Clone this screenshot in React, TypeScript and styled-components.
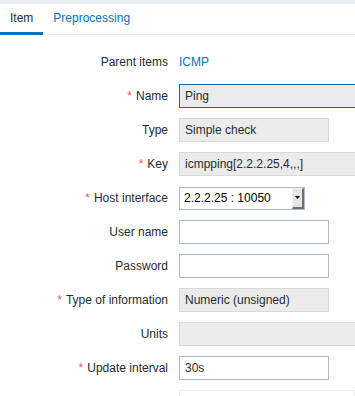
import * as React from 'react';
import styled, { createGlobalStyle } from 'styled-components';

const GlobalStyle = createGlobalStyle`
  html, body {
    margin: 0;
    padding: 0;
    background: #ffffff;
    overflow: hidden;
  }
  body {
    font-family: 'Liberation Sans', Arial, sans-serif;
    font-size: 12px;
    color: #1f2c33;
  }
`;

const Page = styled.div`
  width: 355px;
  height: 396px;
  overflow: hidden;
  background: #fff;
`;

const TopStrip = styled.div`
  height: 4px;
  background: #ebeef0;
`;

const TabBar = styled.div`
  display: flex;
  height: 30px;
  border-bottom: 1px solid #ebeef0;
`;

const Tab = styled.div<{ $active?: boolean }>`
  display: flex;
  align-items: center;
  padding: 0 10px;
  height: 28px;
  margin-bottom: -1px;
  font-size: 12px;
  color: ${({ $active }) => ($active ? '#1f2c33' : '#0275b8')};
  border-bottom: 3px solid ${({ $active }) => ($active ? '#0275b8' : 'transparent')};
`;

const Form = styled.div`
  display: flex;
  flex-direction: column;
  gap: 10px;
  padding-top: 15px;
`;

const Row = styled.div`
  display: flex;
  align-items: center;
  gap: 11px;
  min-height: 24px;
`;

const Label = styled.div`
  flex: 0 0 168px;
  text-align: right;
  white-space: nowrap;
`;

const Required = styled.span`
  color: #e45959;
  margin-right: 4px;
`;

const Field = styled.div`
  flex: 1;
  display: flex;
  min-width: 0;
`;

const Link = styled.span`
  color: #0275b8;
`;

const Input = styled.div<{ $width: number; $readonly?: boolean; $focused?: boolean }>`
  box-sizing: border-box;
  flex: 0 0 auto;
  width: ${({ $width }) => $width}px;
  height: 24px;
  padding: 0 5px;
  display: flex;
  align-items: center;
  white-space: nowrap;
  background: ${({ $readonly }) => ($readonly ? '#ebebeb' : '#ffffff')};
  border: 1px solid
    ${({ $readonly, $focused }) => ($focused ? '#1f65a6' : $readonly ? '#d5dadd' : '#acbbc2')};
  color: #1f2c33;
`;

const Select = styled.div`
  box-sizing: border-box;
  width: 126px;
  height: 23px;
  display: flex;
  align-items: stretch;
  border: 1px solid #acbbc2;
  background: #fff;
`;

const SelectText = styled.div`
  flex: 1;
  display: flex;
  align-items: center;
  padding-left: 4px;
  font-family: 'Liberation Sans', Arial, sans-serif;
  font-size: 12px;
  color: #000;
`;

const SelectButton = styled.div`
  box-sizing: border-box;
  width: 12px;
  display: flex;
  align-items: center;
  justify-content: center;
  background: #e4e4e4;
  border-top: 1px solid #f4f4f4;
  border-left: 1px solid #f4f4f4;
  border-right: 2px solid #6e6e6e;
  border-bottom: 2px solid #6e6e6e;
`;

const IntervalBox = styled.div`
  box-sizing: border-box;
  width: 453px;
  height: 40px;
  border: 1px solid #ebeef0;
`;

export default function App() {
  return (
    <Page>
      <GlobalStyle />
      <TopStrip />
      <TabBar>
        <Tab $active>Item</Tab>
        <Tab>Preprocessing</Tab>
      </TabBar>
      <Form>
        <Row>
          <Label>Parent items</Label>
          <Field>
            <Link>ICMP</Link>
          </Field>
        </Row>
        <Row>
          <Label>
            <Required>*</Required>Name
          </Label>
          <Field>
            <Input $width={453} $readonly $focused>Ping</Input>
          </Field>
        </Row>
        <Row>
          <Label>Type</Label>
          <Field>
            <Input $width={150} $readonly>Simple check</Input>
          </Field>
        </Row>
        <Row>
          <Label>
            <Required>*</Required>Key
          </Label>
          <Field>
            <Input $width={453} $readonly>icmpping[2.2.2.25,4,,,]</Input>
          </Field>
        </Row>
        <Row>
          <Label>
            <Required>*</Required>Host interface
          </Label>
          <Field>
            <Select>
              <SelectText>2.2.2.25 : 10050</SelectText>
              <SelectButton>
                <svg width="5" height="3" viewBox="0 0 5 3">
                  <path d="M0 0H5L2.5 3Z" fill="#000" />
                </svg>
              </SelectButton>
            </Select>
          </Field>
        </Row>
        <Row>
          <Label>User name</Label>
          <Field>
            <Input $width={150} />
          </Field>
        </Row>
        <Row>
          <Label>Password</Label>
          <Field>
            <Input $width={150} />
          </Field>
        </Row>
        <Row>
          <Label>
            <Required>*</Required>Type of information
          </Label>
          <Field>
            <Input $width={150} $readonly>Numeric (unsigned)</Input>
          </Field>
        </Row>
        <Row>
          <Label>Units</Label>
          <Field>
            <Input $width={453} $readonly />
          </Field>
        </Row>
        <Row>
          <Label>
            <Required>*</Required>Update interval
          </Label>
          <Field>
            <Input $width={150}>30s</Input>
          </Field>
        </Row>
        <Row>
          <Label />
          <Field>
            <IntervalBox />
          </Field>
        </Row>
      </Form>
    </Page>
  );
}
